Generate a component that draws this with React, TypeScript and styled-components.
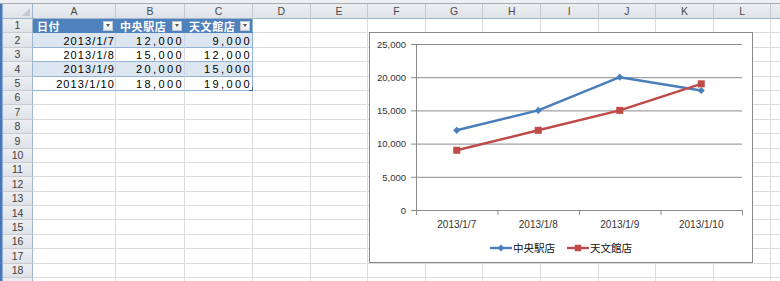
import React from "react";
import styled, { createGlobalStyle } from "styled-components";

const GlobalStyle = createGlobalStyle`
  html, body {
    margin: 0;
    padding: 0;
    background: #ffffff;
  }
  body {
    width: 780px;
    height: 281px;
    overflow: hidden;
    font-family: "Liberation Sans", Arial, sans-serif;
  }
`;

// M is only a sliver at the right edge, so it gets no letter
const COLUMNS = [
  { name: "A", width: 83 },
  { name: "B", width: 69 },
  { name: "C", width: 68 },
  ...["D", "E", "F", "G", "H", "I", "J", "K", "L"].map((name) => ({ name, width: 57.6 })),
  { name: "", width: 57.6 },
];

const ROW_COUNT = 19;
const LABELED_ROWS = 18;

const rows = [
  { date: "2013/1/7", chuo: 12000, tenmon: 9000 },
  { date: "2013/1/8", chuo: 15000, tenmon: 12000 },
  { date: "2013/1/9", chuo: 20000, tenmon: 15000 },
  { date: "2013/1/10", chuo: 18000, tenmon: 19000 },
];

const headers = ["日付", "中央駅店", "天文館店"];

const fmt = (n: number) => n.toLocaleString("en-US");

// chart geometry (inside the chart border)
const PLOT_LEFT = 46;
const PLOT_RIGHT = 372;
const Y_ZERO = 177;
const Y_STEP = 33.2;
const CAT_W = (PLOT_RIGHT - PLOT_LEFT) / 4;
const yOf = (v: number) => Y_ZERO - (v / 5000) * Y_STEP;
const xOf = (i: number) => PLOT_LEFT + CAT_W * i + CAT_W / 2;

const BLUE = "#4a7ebb";
const RED = "#be4b48";

const Sheet = styled.div`
  position: relative;
  width: 780px;
  height: 281px;
  overflow: hidden;
  background: #ffffff;
`;

const TopStrip = styled.div`
  height: 3px;
  background: #eef0f3;
  border-bottom: 1px solid #a7abb0;
`;

const Body = styled.div`
  display: flex;
`;

const WindowEdge = styled.div`
  width: 2px;
  border-right: 1px solid #8fb0dc;
  background: #4a76b6;
  flex: none;
`;

const Grid = styled.div`
  display: grid;
  grid-template-columns: 30px ${COLUMNS.map((c) => `${c.width}px`).join(" ")};
  grid-template-rows: 15px repeat(${ROW_COUNT}, 14.4px);
`;

const HeadBase = styled.div`
  box-sizing: border-box;
  display: flex;
  align-items: center;
  justify-content: center;
  background: linear-gradient(#eceef1, #dfe3e8);
  color: #4c4c4c;
  font-size: 10.5px;
  line-height: 1;
  overflow: hidden;
`;

const Corner = styled(HeadBase)`
  border-right: 1px solid #9eb6ce;
  border-bottom: 1px solid #9eb6ce;
  justify-content: flex-end;
  align-items: flex-end;
  padding: 0 2px 2px 0;
`;

const CornerTriangle = styled.div`
  width: 0;
  height: 0;
  border-left: 8px solid transparent;
  border-bottom: 8px solid #c4cad2;
`;

const ColHeader = styled(HeadBase)`
  border-right: 1px solid #c3c8cf;
  border-bottom: 1px solid #9eb6ce;
`;

const RowHeader = styled(HeadBase)`
  border-right: 1px solid #9eb6ce;
  border-bottom: 1px solid #c8ccd2;
  color: #3e3e3e;
`;

type Tone = "head" | "band" | "plain" | "empty";

const Cell = styled.div<{ $tone: Tone; $last?: boolean; $numeric?: boolean }>`
  position: relative;
  box-sizing: border-box;
  display: flex;
  align-items: center;
  justify-content: ${(p) => (p.$tone === "head" ? "space-between" : "flex-end")};
  padding: ${(p) => (p.$tone === "head" ? "0 2px 0 4px" : "1px 0 0 0")};
  background: ${(p) =>
    p.$tone === "head" ? "#4f81bd" : p.$tone === "band" ? "#dce6f1" : "#ffffff"};
  color: ${(p) => (p.$tone === "head" ? "#ffffff" : "#000000")};
  font-family: "Liberation Sans", "Noto Sans CJK JP", sans-serif;
  font-size: 11px;
  letter-spacing: ${(p) => (p.$numeric ? "2.4px" : "1.1px")};
  white-space: nowrap;
  border-right: 1px solid
    ${(p) =>
      p.$tone === "empty"
        ? "#dadcdd"
        : p.$last
        ? "#95b3d7"
        : p.$tone === "head"
        ? "#4f81bd"
        : p.$tone === "band"
        ? "#cbd7e7"
        : "#dadcdd"};
  border-bottom: 1px solid
    ${(p) => (p.$tone === "empty" ? "#dadcdd" : p.$tone === "head" ? "#4f81bd" : "#95b3d7")};
`;

const HeadLabel = styled.span`
  font-family: "Noto Sans CJK JP", sans-serif;
  font-size: 11px;
  font-weight: bold;
  letter-spacing: 0.6px;
`;

const FilterButton = styled.span`
  box-sizing: border-box;
  flex: none;
  width: 10px;
  height: 10px;
  display: flex;
  align-items: center;
  justify-content: center;
  background: linear-gradient(#ffffff, #e8ebee);
  border: 1px solid #c2c7cd;
  &::after {
    content: "";
    width: 0;
    height: 0;
    border-left: 2.5px solid transparent;
    border-right: 2.5px solid transparent;
    border-top: 3px solid #555555;
  }
`;

const ResizeHandle = styled.span`
  position: absolute;
  right: -1px;
  bottom: -1px;
  width: 3px;
  height: 3px;
  border-right: 1px solid #3a6eb4;
  border-bottom: 1px solid #3a6eb4;
`;

const Chart = styled.div`
  position: absolute;
  left: 369px;
  top: 32px;
  width: 384px;
  height: 231px;
  box-sizing: border-box;
  border: 1px solid #8a8a8a;
  background: #ffffff;
  display: flex;
  flex-direction: column;
`;

const Plot = styled.svg`
  display: block;
  flex: none;
`;

const Legend = styled.div`
  flex: none;
  height: 24px;
  display: flex;
  align-items: center;
  justify-content: center;
  gap: 12px;
`;

const LegendItem = styled.div`
  display: flex;
  align-items: center;
  gap: 1px;
  font-family: "Noto Sans CJK JP", sans-serif;
  font-size: 10.5px;
  color: #111111;
  line-height: 1;
`;

const AxisText = styled.text<{ $size: number }>`
  font-family: "Liberation Sans", Arial, sans-serif;
  font-size: ${(p) => p.$size}px;
  fill: #333333;
`;

const Diamond = ({ x, y, r = 3.6 }: { x: number; y: number; r?: number }) => (
  <polygon points={`${x},${y - r} ${x + r},${y} ${x},${y + r} ${x - r},${y}`} fill={BLUE} />
);

const Square = ({ x, y, s = 7 }: { x: number; y: number; s?: number }) => (
  <rect x={x - s / 2} y={y - s / 2} width={s} height={s} fill={RED} />
);

const LegendSwatch = ({ kind }: { kind: "blue" | "red" }) => (
  <svg width="22" height="10" viewBox="0 0 22 10">
    <line x1="0" y1="5" x2="22" y2="5" stroke={kind === "blue" ? BLUE : RED} strokeWidth="2.4" />
    {kind === "blue" ? <Diamond x={11} y={5} r={3.4} /> : <Square x={11} y={5} s={6.5} />}
  </svg>
);

const SalesChart = () => {
  const ticks = [0, 5000, 10000, 15000, 20000, 25000];
  const blue = rows.map((r, i) => ({ x: xOf(i), y: yOf(r.chuo) }));
  const red = rows.map((r, i) => ({ x: xOf(i), y: yOf(r.tenmon) }));
  const toPath = (pts: { x: number; y: number }[]) => pts.map((p) => `${p.x},${p.y}`).join(" ");

  return (
    <Chart>
      <Plot width={382} height={203} viewBox="0 0 382 203">
        {ticks.map((t) => (
          <g key={t}>
            {t > 0 && (
              <line x1={PLOT_LEFT} x2={PLOT_RIGHT} y1={yOf(t) + 0.5} y2={yOf(t) + 0.5} stroke="#8a8a8a" />
            )}
            <line x1={PLOT_LEFT - 5} x2={PLOT_LEFT} y1={yOf(t) + 0.5} y2={yOf(t) + 0.5} stroke="#8a8a8a" />
            <AxisText $size={9.5} x={36} y={yOf(t) + 3.8} textAnchor="end">
              {fmt(t)}
            </AxisText>
          </g>
        ))}
        <line x1={PLOT_LEFT + 0.5} x2={PLOT_LEFT + 0.5} y1={yOf(25000)} y2={Y_ZERO + 0.5} stroke="#8a8a8a" />
        <line x1={PLOT_LEFT} x2={PLOT_RIGHT} y1={Y_ZERO + 0.5} y2={Y_ZERO + 0.5} stroke="#8a8a8a" />
        {[0, 1, 2, 3, 4].map((k) => (
          <line
            key={k}
            x1={PLOT_LEFT + CAT_W * k + 0.5}
            x2={PLOT_LEFT + CAT_W * k + 0.5}
            y1={Y_ZERO}
            y2={Y_ZERO + 5}
            stroke="#8a8a8a"
          />
        ))}
        {rows.map((r, i) => (
          <AxisText key={r.date} $size={10} x={xOf(i)} y={194.5} textAnchor="middle">
            {r.date}
          </AxisText>
        ))}
        <polyline points={toPath(blue)} fill="none" stroke={BLUE} strokeWidth="2.5" strokeLinejoin="round" />
        <polyline points={toPath(red)} fill="none" stroke={RED} strokeWidth="2.5" strokeLinejoin="round" />
        {blue.map((p, i) => (
          <Diamond key={i} x={p.x} y={p.y} />
        ))}
        {red.map((p, i) => (
          <Square key={i} x={p.x} y={p.y} />
        ))}
      </Plot>
      <Legend>
        <LegendItem>
          <LegendSwatch kind="blue" />
          中央駅店
        </LegendItem>
        <LegendItem>
          <LegendSwatch kind="red" />
          天文館店
        </LegendItem>
      </Legend>
    </Chart>
  );
};

const cellContent = (row: number, col: number) => {
  if (col > 2 || row > 5) return { tone: "empty" as Tone, text: null as React.ReactNode, numeric: false };
  if (row === 1) {
    return {
      tone: "head" as Tone,
      text: (
        <>
          <HeadLabel>{headers[col]}</HeadLabel>
          <FilterButton />
        </>
      ),
      numeric: false,
    };
  }
  const r = rows[row - 2];
  const text = col === 0 ? r.date : col === 1 ? fmt(r.chuo) : fmt(r.tenmon);
  return { tone: (row % 2 === 0 ? "band" : "plain") as Tone, text, numeric: col > 0 };
};

export default function App() {
  return (
    <>
      <GlobalStyle />
      <Sheet>
        <TopStrip />
        <Body>
          <WindowEdge />
          <Grid>
            <Corner>
              <CornerTriangle />
            </Corner>
            {COLUMNS.map((c, i) => (
              <ColHeader key={i}>{c.name}</ColHeader>
            ))}
            {Array.from({ length: ROW_COUNT }, (_, i) => i + 1).map((row) => (
              <React.Fragment key={row}>
                <RowHeader>{row <= LABELED_ROWS ? row : null}</RowHeader>
                {COLUMNS.map((c, col) => {
                  const { tone, text, numeric } = cellContent(row, col);
                  return (
                    <Cell key={col} $tone={tone} $last={col === 2} $numeric={numeric}>
                      {text}
                      {row === 5 && col === 2 && <ResizeHandle />}
                    </Cell>
                  );
                })}
              </React.Fragment>
            ))}
          </Grid>
        </Body>
        <SalesChart />
      </Sheet>
    </>
  );
}
